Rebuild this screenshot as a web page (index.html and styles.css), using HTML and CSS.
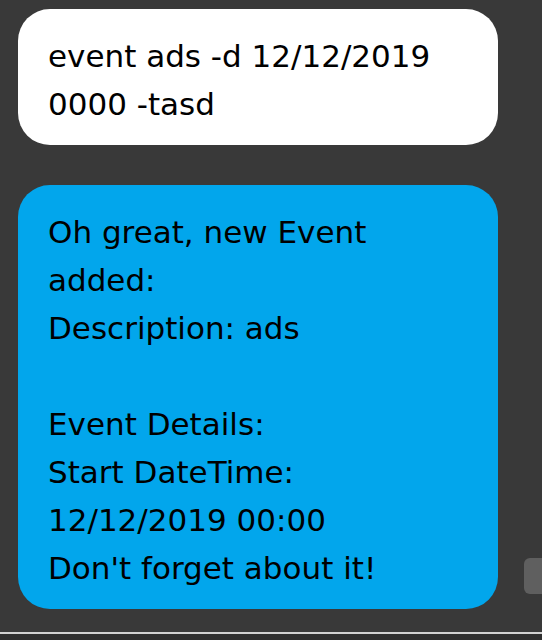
FILE: index.html
```html
<!DOCTYPE html>
<html>
<head>
<meta charset="utf-8">
<link rel="stylesheet" href="styles.css">
</head>
<body>
<div class="frame">
  <div class="viewport">
    <div class="chat">
      <div class="bubble user">event ads -d 12/12/2019<br>0000 -tasd</div>
      <div class="bubble bot">Oh great, new Event<br>added:<br>Description: ads<br><br>Event Details:<br>Start DateTime:<br>12/12/2019 00:00<br>Don't forget about it!</div>
    </div>
    <div class="thumb"></div>
  </div>
  <div class="rule"></div>
  <div class="footer"></div>
</div>
</body>
</html>
```
FILE: styles.css
```css
html, body {
  margin: 0;
  padding: 0;
  background: #393939;
}
.frame {
  display: flex;
  flex-direction: column;
  width: 542px;
  height: 640px;
}
.viewport {
  position: relative;
  height: 632px;
  overflow: hidden;
}
.chat {
  display: flex;
  flex-direction: column;
  gap: 40px;
  padding: 9px 44px 0 18px;
}
.bubble {
  border-radius: 32px;
  padding: 23px 30px 17px;
  font-family: "Comic Sans MS", "DejaVu Sans", sans-serif;
  font-size: 31px;
  line-height: 48px;
  color: #000;
  white-space: nowrap;
}
.user {
  background: #ffffff;
}
.bot {
  background: #02a6ec;
}
.thumb {
  position: absolute;
  right: 0;
  top: 558px;
  width: 18px;
  height: 36px;
  background: #5f5f5f;
  border-radius: 6px 0 0 6px;
}
.rule {
  height: 2px;
  background: #d2d2d2;
}
.footer {
  flex: 1;
  background: #2f2f2f;
}
```
